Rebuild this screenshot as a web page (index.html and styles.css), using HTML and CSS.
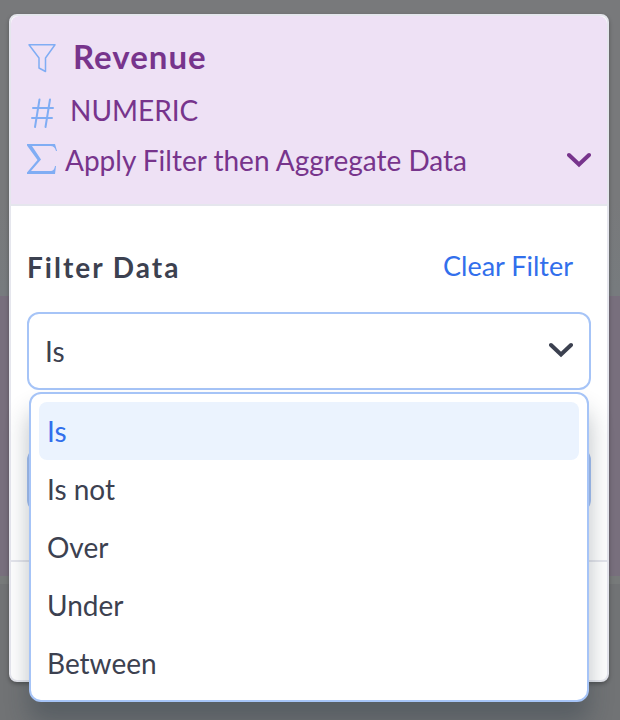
FILE: index.html
```html
<!DOCTYPE html>
<html lang="en">
<head>
<meta charset="utf-8">
<meta name="viewport" content="width=device-width, initial-scale=1">
<title>Revenue</title>
<link rel="stylesheet" href="styles.css">
</head>
<body>
<main class="card">
  <header class="card-header">
    <div class="row title-row">
      <svg class="icon" viewBox="0 0 30 34" aria-hidden="true"><path d="M2 5.800H28L18.500 19V32.500L12 29V19Z" fill="none" stroke="currentColor" stroke-width="1.500" stroke-linejoin="round"/></svg>
      <h1 class="title">Revenue</h1>
    </div>
    <div class="row type-row">
      <svg class="icon" viewBox="0 0 30 34" aria-hidden="true"><path d="M12.500 6.500 8 34M23 6.500 18.500 34M6 15H26M5 25H25" fill="none" stroke="currentColor" stroke-width="2" stroke-linecap="round"/></svg>
      <span class="label">NUMERIC</span>
    </div>
    <button class="row mode-row" type="button">
      <svg class="icon" viewBox="0 0 30 34" aria-hidden="true"><path d="M0 1H28L30 8H29C28 4.500 26.500 3 23.500 3H5L14 16.500 4 28H23C26.500 28 27.500 26 28 23H29L28 31H0V29.500L10.500 17 0 2.500Z" fill="currentColor"/></svg>
      <span class="label">Apply Filter then Aggregate Data</span>
      <svg class="chevron" viewBox="0 0 24 16" aria-hidden="true"><path d="M2 3 12 12.500 22 3" fill="none" stroke="currentColor" stroke-width="4" stroke-linecap="round"/></svg>
    </button>
  </header>
  <section class="filter">
    <div class="filter-head">
      <h2 class="subtitle"><label for="condition">Filter Data</label></h2>
      <button class="clear" type="button">Clear Filter</button>
    </div>
    <div class="dropdown">
      <select class="select" id="condition">
        <option selected>Is</option>
        <option>Is not</option>
        <option>Over</option>
        <option>Under</option>
        <option>Between</option>
      </select>
      <svg class="chevron select-chevron" viewBox="0 0 24 16" aria-hidden="true"><path d="M2 3 12 12.500 22 3" fill="none" stroke="currentColor" stroke-width="4" stroke-linecap="round"/></svg>
      <div class="menu" role="listbox" aria-labelledby="condition">
        <button class="option selected" type="button" role="option" aria-selected="true">Is</button>
        <button class="option" type="button" role="option" aria-selected="false">Is not</button>
        <button class="option" type="button" role="option" aria-selected="false">Over</button>
        <button class="option" type="button" role="option" aria-selected="false">Under</button>
        <button class="option" type="button" role="option" aria-selected="false">Between</button>
      </div>
    </div>
    <input class="value" type="text" aria-labelledby="condition">
  </section>
  <footer class="card-footer"></footer>
</main>
</body>
</html>
```
FILE: styles.css
```css
* {
  box-sizing: border-box;
}

body {
  margin: 0;
  min-height: 100vh;
  padding: 14px 11px 38px 9px;
  background: linear-gradient(#78797b 0 200px, #777b7e 290px 296px, #786f7d 296px 576px, #777a7a 576px 584px, #717375 584px);
  color: #3c4150;
  font: 400 28px/40px Lato, "Liberation Sans", sans-serif;
}

button,
input,
select {
  font: inherit;
  color: inherit;
}

button {
  border: 0;
  background: none;
  text-align: left;
  cursor: pointer;
}

.card {
  border: 2px solid #e5e6ed;
  border-radius: 8px;
  background: #fff;
  box-shadow: 0 2px 4px rgba(0, 0, 0, 0.3);
}

.card-header {
  display: flex;
  flex-direction: column;
  gap: 10px;
  padding: 18px 16px 26px;
  border-bottom: 2px solid #e5e6ed;
  border-radius: 8px 8px 0 0;
  background: #eee1f5;
  color: #77348c;
}

.row {
  display: flex;
  align-items: center;
  gap: 16px;
  padding: 0;
  line-height: 44px;
}

.type-row {
  gap: 13px;
}

.mode-row {
  gap: 8px;
  line-height: 36px;
}

.icon {
  flex: none;
  width: 30px;
  height: 34px;
  overflow: visible;
  color: #80adf4;
}

.title {
  margin: 0;
  font-size: 33px;
  font-weight: 700;
  letter-spacing: 1px;
}

.chevron {
  flex: none;
  width: 24px;
  height: 16px;
  margin-left: auto;
}

.filter {
  padding: 41px 16px 48px;
  border-bottom: 2px solid #e5e6ed;
}

.filter-head {
  display: flex;
  align-items: flex-start;
  justify-content: space-between;
  margin-bottom: 25px;
  padding-right: 18px;
}

.subtitle {
  margin: 0;
  font-size: 28px;
  font-weight: 700;
  letter-spacing: 2px;
}

.clear {
  padding: 0;
  color: #326fec;
  font-size: 27px;
  line-height: 38px;
}

.dropdown {
  position: relative;
  margin-bottom: 58px;
}

.select,
.value {
  display: block;
  width: 100%;
  border: 2px solid #a6c4f7;
  border-radius: 12px;
  background: #fff;
}

.select {
  height: 78px;
  padding: 0 16px;
  appearance: none;
}

.value {
  height: 64px;
}

.select-chevron {
  position: absolute;
  top: 30px;
  right: 18px;
  pointer-events: none;
}

.menu {
  position: absolute;
  top: calc(100% + 2px);
  left: 2px;
  right: 2px;
  padding: 8px;
  border: 2px solid #a6c4f7;
  border-radius: 12px;
  background: #fff;
  box-shadow: 0 20px 24px rgba(30, 45, 60, 0.3);
}

.option {
  display: block;
  width: 100%;
  height: 58px;
  padding: 0 8px;
  border-radius: 8px;
}

.selected {
  background: #ebf3fe;
  color: #326fec;
}

.card-footer {
  height: 118px;
}
```
